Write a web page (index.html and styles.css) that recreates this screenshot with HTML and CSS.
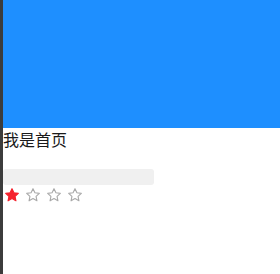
FILE: index.html
```html
<!DOCTYPE html>
<html lang="zh-CN">
<head>
    <meta charset="UTF-8">
    <meta name="viewport" content="width=device-width, initial-scale=1.0">
    <title>首页</title>
    <link rel="stylesheet" href="styles.css">
</head>
<body>

    <div class="page">
        <div class="banner"></div>

        <div class="title">我是首页</div>

        <div class="progress"></div>

        <div class="rate">
            <svg class="star on" viewBox="0 0 24 24"><path d="M12 2.5l2.9 6.2 6.6.8-4.9 4.6 1.3 6.6L12 17.4l-5.9 3.3 1.3-6.6-4.9-4.6 6.6-.8z"/></svg>
            <svg class="star" viewBox="0 0 24 24"><path d="M12 2.5l2.9 6.2 6.6.8-4.9 4.6 1.3 6.6L12 17.4l-5.9 3.3 1.3-6.6-4.9-4.6 6.6-.8z"/></svg>
            <svg class="star" viewBox="0 0 24 24"><path d="M12 2.5l2.9 6.2 6.6.8-4.9 4.6 1.3 6.6L12 17.4l-5.9 3.3 1.3-6.6-4.9-4.6 6.6-.8z"/></svg>
            <svg class="star" viewBox="0 0 24 24"><path d="M12 2.5l2.9 6.2 6.6.8-4.9 4.6 1.3 6.6L12 17.4l-5.9 3.3 1.3-6.6-4.9-4.6 6.6-.8z"/></svg>
        </div>
    </div>

</body>
</html>
```

FILE: styles.css
```css
html, body {
    height: 100%;
}

body {
    margin: 0;
    font-family: "Noto Sans CJK SC", "Liberation Sans", sans-serif;
    background-color: #fff;
    border-left: 3px solid #3c3c3c;
    box-sizing: border-box;
}

.banner {
    height: 128px;
    background-color: #1e8fff;
}

.title {
    font-size: 16px;
    line-height: 22px;
    color: #1a1a1a;
}

.progress {
    width: 151px;
    height: 16px;
    margin-top: 19px;
    background-color: #f0f0f0;
    border-radius: 3px;
}

.rate {
    display: flex;
    gap: 5px;
    padding-left: 1px;
    margin-top: 2px;
}

.star {
    width: 16px;
    height: 16px;
    fill: none;
    stroke: #aaa;
    stroke-width: 1.7;
    stroke-linejoin: round;
}

.star.on {
    fill: #f5222d;
    stroke: #f5222d;
}
```
